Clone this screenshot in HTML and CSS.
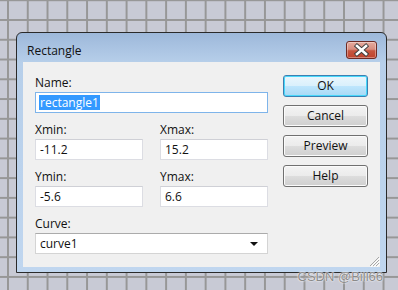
FILE: index.html
```html
<!DOCTYPE html>
<html>
<head>
  <title>Rectangle</title>
  <link rel="stylesheet" href="styles.css">
</head>
<body>
  <div class="window">
    <div class="titlebar">
      <span class="title">Rectangle</span>
      <div class="close">
        <svg width="29" height="16" viewBox="0 0 29 16">
          <path d="M10 4 L19 12 M19 4 L10 12" stroke="#3d3d3d" stroke-width="4.4" stroke-linecap="square" fill="none"/>
          <path d="M10 4 L19 12 M19 4 L10 12" stroke="#ffffff" stroke-width="2.6" stroke-linecap="square" fill="none"/>
        </svg>
      </div>
    </div>
    <div class="client">
      <div class="form">
        <div class="field">
          <div class="label">Name:</div>
          <div class="input focused"><span class="selected">rectangle1</span></div>
        </div>
        <div class="pair">
          <div class="field">
            <div class="label">Xmin:</div>
            <div class="input">-11.2</div>
          </div>
          <div class="field">
            <div class="label">Xmax:</div>
            <div class="input">15.2</div>
          </div>
        </div>
        <div class="pair">
          <div class="field">
            <div class="label">Ymin:</div>
            <div class="input">-5.6</div>
          </div>
          <div class="field">
            <div class="label">Ymax:</div>
            <div class="input">6.6</div>
          </div>
        </div>
        <div class="field">
          <div class="label">Curve:</div>
          <div class="input combo">curve1<span class="arrow"></span></div>
        </div>
      </div>
      <div class="buttons">
        <div class="btn default">OK</div>
        <div class="btn">Cancel</div>
        <div class="btn">Preview</div>
        <div class="btn">Help</div>
      </div>
      <svg class="grip" width="12" height="12" viewBox="0 0 12 12">
        <path d="M11 2 L2 11 M11 5 L5 11 M11 8 L8 11" stroke="#a7a7a7" stroke-width="1" fill="none"/>
        <path d="M12 3 L3 12 M12 6 L6 12 M12 9 L9 12" stroke="#ffffff" stroke-width="1" fill="none"/>
      </svg>
    </div>
  </div>
  <div class="watermark">CSDN @Bill66</div>
</body>
</html>
```

FILE: styles.css
```css
body {
  margin: 0;
  width: 398px;
  height: 290px;
  overflow: hidden;
  position: relative;
  font-family: "Open Sans", "Noto Sans", sans-serif;
  font-size: 12px;
  color: #111;
  background-color: #c8cad5;
  background-image:
    linear-gradient(to right, #979797 2px, transparent 2px),
    linear-gradient(to bottom, #979797 2px, transparent 2px);
  background-size: 19.78px 19.78px;
  background-position: 7px 19px;
}

.window {
  box-sizing: border-box;
  width: 371px;
  height: 241px;
  margin: 32px 0 0 16px;
  border: 1px solid #2a2a2a;
  border-radius: 6px 6px 0 0;
  background: linear-gradient(to bottom, #9db8da 0px, #b7cfea 30px, #c0d6ef 100%);
  padding: 0 6px 5px 6px;
  display: flex;
  flex-direction: column;
}

.titlebar {
  height: 29px;
  display: flex;
  align-items: flex-start;
  justify-content: space-between;
}

.title {
  margin-top: 10px;
  margin-left: 4px;
  line-height: 16px;
  color: #111;
}

.close {
  margin-top: 8px;
  margin-right: 3px;
  width: 29px;
  height: 16px;
  border: 1px solid #6e2a24;
  border-radius: 3px;
  background: linear-gradient(to bottom, #e6ab9f 0%, #d88d7f 45%, #c6553f 55%, #c0432d 100%);
  box-shadow: inset 0 0 0 1px rgba(255, 255, 255, 0.35);
}

.close svg {
  display: block;
}

.client {
  flex: 1;
  position: relative;
  background: #f0f0f0;
  padding: 13px 12px 0 12px;
  display: flex;
  gap: 15px;
}

.form {
  width: 233px;
  display: flex;
  flex-direction: column;
  gap: 9px;
}

.pair {
  display: flex;
  gap: 17px;
}

.pair .field {
  width: 108px;
}

.label {
  height: 15px;
  line-height: 15px;
  margin-bottom: 2px;
}

.input {
  box-sizing: border-box;
  height: 21px;
  line-height: 19px;
  padding-left: 4px;
  background: #fff;
  border: 1px solid #dcdde3;
  border-top-color: #cfd0d6;
  white-space: nowrap;
}

.input.focused {
  border-color: #7eb4ea;
}

.selected {
  display: inline-block;
  background: #3399ff;
  color: #fff;
  line-height: 15px;
  padding: 0 1px;
  margin-left: -1px;
  margin-top: 2px;
}

.combo {
  position: relative;
  border-color: #d4d4d4;
  border-top-color: #ababab;
}

.arrow {
  position: absolute;
  right: 9px;
  top: 8px;
  width: 0;
  height: 0;
  border-left: 4px solid transparent;
  border-right: 4px solid transparent;
  border-top: 4px solid #111;
}

.buttons {
  width: 85px;
  display: flex;
  flex-direction: column;
  gap: 8px;
}

.btn {
  box-sizing: border-box;
  height: 22px;
  line-height: 20px;
  text-align: center;
  border: 1px solid #707070;
  border-radius: 3px;
  background: linear-gradient(to bottom, #f3f3f3 0%, #ebebeb 50%, #dddddd 50%, #cfcfcf 100%);
  box-shadow: inset 0 0 0 1px #fbfbfb;
}

.btn.default {
  border-color: #3c7fb1;
  background: linear-gradient(to bottom, #eaf6fd 0%, #d9f0fc 50%, #bee6fd 50%, #a7d9f5 100%);
  box-shadow: inset 0 0 0 1px #48d8fb;
}

.grip {
  position: absolute;
  right: 0;
  bottom: 0;
}

.watermark {
  position: absolute;
  right: 15px;
  bottom: 6px;
  font-family: "Liberation Sans", Arial, sans-serif;
  font-size: 13px;
  color: #8a8a8a;
  text-shadow: 0 0 2px #fff, 0 0 1px #fff;
}
```
